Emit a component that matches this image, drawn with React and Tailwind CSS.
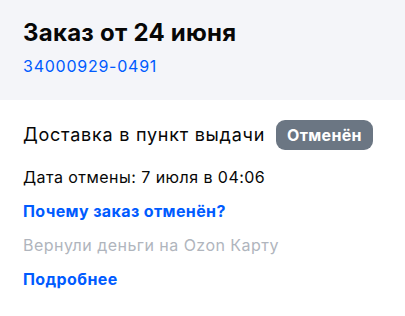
import React from 'react';

export default function App() {
  return (
    <div className="w-[405px] h-[316px] bg-white font-['Inter','Noto_Sans',sans-serif] text-[#070707]">
      {/* Header */}
      <div className="bg-[#f4f5f9] h-[100px] px-[23px] pt-[17px]">
        <h1 className="text-[24px] leading-[32px] font-bold tracking-[0.25px]">Заказ от 24 июня</h1>
        <div className="mt-[6px] text-[16px] leading-[22px] tracking-[0.75px] text-[#005bff]">34000929-0491</div>
      </div>

      {/* Body */}
      <div className="px-[23px] pt-[20px]">
        <div className="flex items-center gap-[11px]">
          <span className="text-[18px] leading-[30px] tracking-[0.75px]">Доставка в пункт выдачи</span>
          <span className="h-[30px] px-[11px] flex items-center rounded-[9px] bg-[#6b7683] text-white text-[16px] font-bold tracking-[0.3px]">
            Отменён
          </span>
        </div>
        <div className="mt-[16px] text-[16px] leading-[22px] tracking-[0.45px]">Дата отмены: 7 июля в 04:06</div>
        <div className="mt-[12px] text-[16px] leading-[22px] font-bold tracking-[0.38px] text-[#005bff]">Почему заказ отменён?</div>
        <div className="mt-[12px] text-[16px] leading-[22px] tracking-[0.46px] text-[#b0b5bd]">Вернули деньги на Ozon Карту</div>
        <div className="mt-[12px] text-[16px] leading-[22px] font-bold tracking-[0.38px] text-[#005bff]">Подробнее</div>
      </div>
    </div>
  );
}
